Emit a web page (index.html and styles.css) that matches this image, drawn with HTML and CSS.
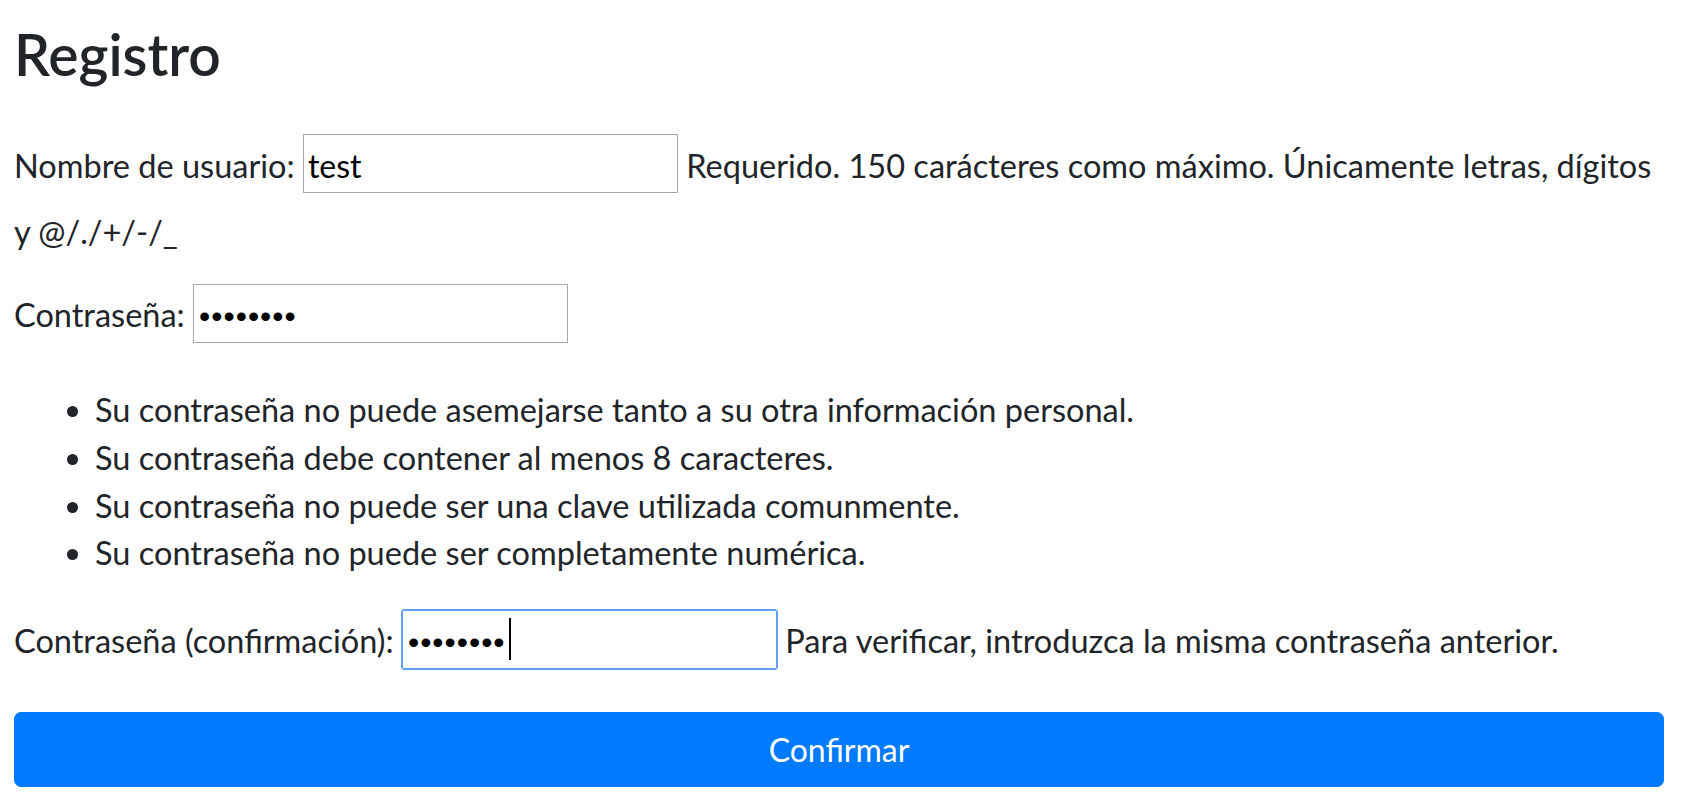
FILE: index.html
```html
<!DOCTYPE html>
<html lang="es">
<head>
<meta charset="utf-8">
<title>Registro</title>
<link rel="stylesheet" href="styles.css">
</head>
<body>
<main class="container">
  <h2 class="title">Registro</h2>
  <form class="form">
    <div class="field">
      <label class="label" for="id_username">Nombre de usuario:</label> <input class="input" type="text" id="id_username" value="test"> <span class="help">Requerido. 150 carácteres como máximo. Únicamente letras, dígitos y @/./+/-/_</span>
    </div>
    <div class="field">
      <label class="label" for="id_password1">Contraseña:</label> <input class="input input-pass" type="password" id="id_password1" value="abcdefgh">
    </div>
    <ul class="rules">
      <li>Su contraseña no puede asemejarse tanto a su otra información personal.</li>
      <li>Su contraseña debe contener al menos 8 caracteres.</li>
      <li>Su contraseña no puede ser una clave utilizada comunmente.</li>
      <li>Su contraseña no puede ser completamente numérica.</li>
    </ul>
    <div class="field">
      <label class="label" for="id_password2">Contraseña (confirmación):</label> <span class="input-wrap"><input class="input input-pass input-focus" type="password" id="id_password2" value="abcdefgh"><span class="caret"></span></span> <span class="help">Para verificar, introduzca la misma contraseña anterior.</span>
    </div>
    <button class="btn" type="button">Confirmar</button>
  </form>
</main>
</body>
</html>
```

FILE: styles.css
```css
html, body {
  margin: 0;
  padding: 0;
  background: #ffffff;
}

body {
  font-family: Lato, "Open Sans", "Liberation Sans", sans-serif;
  font-size: 32.5px;
  line-height: 48px;
  color: #212529;
}

.container {
  padding: 20px 27px 0 14px;
}

.title {
  margin: 0 0 46px;
  font-size: 57px;
  font-weight: 600;
  line-height: 68px;
  color: #212529;
}

.form {
  margin: 0;
}

.field {
  margin: 0 0 28px;
}

.label {
  color: #212529;
}

.input {
  box-sizing: border-box;
  width: 375px;
  height: 59px;
  margin: 0 0 15px;
  padding: 3px 4px 0;
  border: 1px solid #a9a9a9;
  border-radius: 0;
  font-family: inherit;
  font-size: 32px;
  color: #000;
  background: #fff;
  vertical-align: baseline;
  outline: none;
}

.input-pass {
  font-family: "Liberation Sans", Arial, sans-serif;
  letter-spacing: 1px;
  padding: 5px 4px 0 5px;
}

.input-wrap {
  position: relative;
  display: inline-block;
}

.input-focus {
  border-color: #5e9ef5;
  border-radius: 2px;
  outline: 1px solid #5e9ef5;
  outline-offset: 0;
}

.caret {
  position: absolute;
  left: 107px;
  top: 8px;
  width: 2px;
  height: 42px;
  background: #000;
}

.rules {
  margin: 0 0 33px;
  padding: 0 0 0 81px;
}

.rules li {
  line-height: 47.8px;
}

.btn {
  display: block;
  box-sizing: border-box;
  width: 100%;
  height: 75px;
  padding: 0;
  border: 1px solid #007bff;
  border-radius: 7px;
  background: #007bff;
  color: #ffffff;
  font-family: inherit;
  font-size: 32px;
  cursor: pointer;
}
```
